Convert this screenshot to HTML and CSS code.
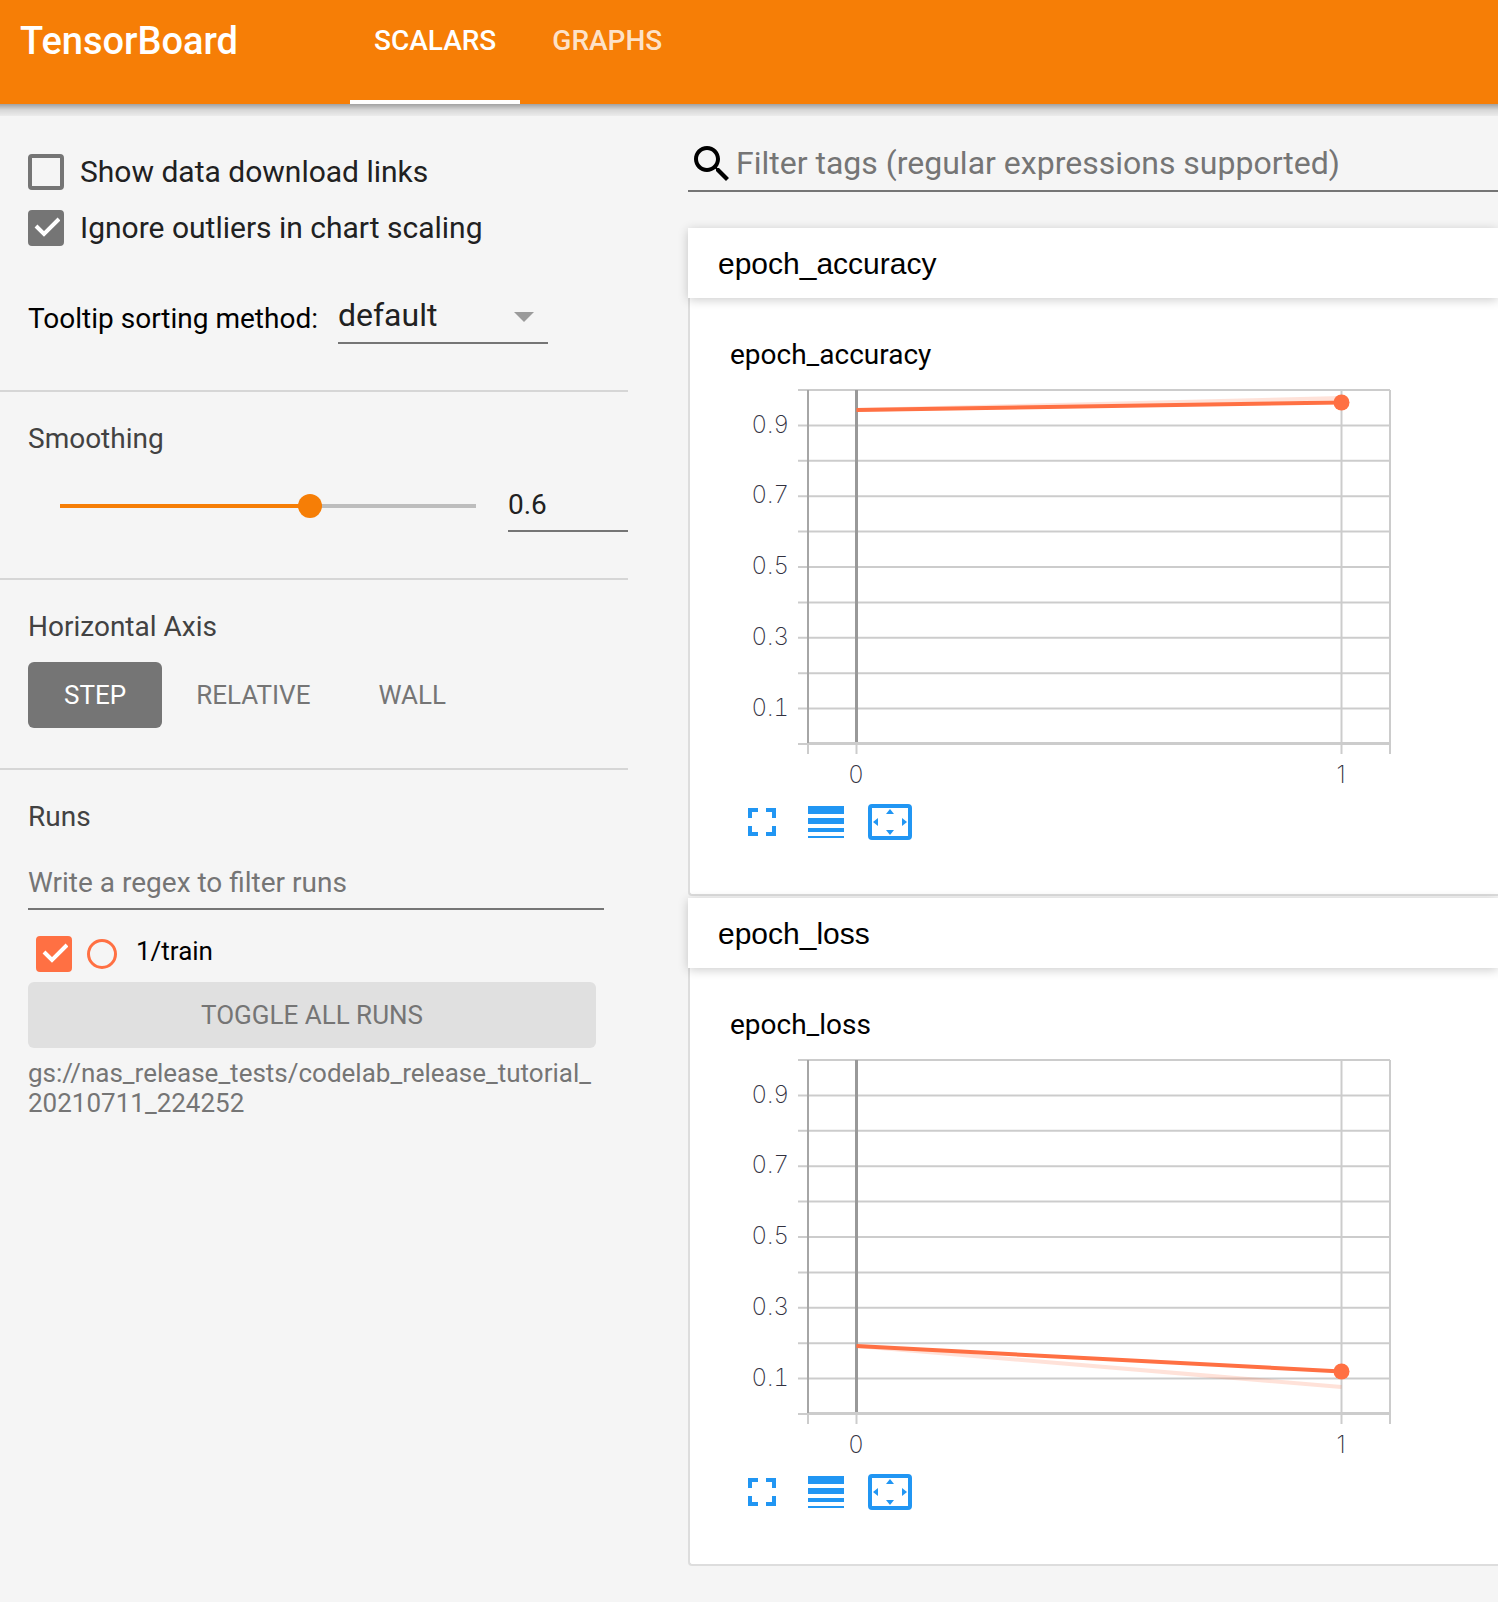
FILE: index.html
```html
<!DOCTYPE html>
<html lang="en">
<head>
<meta charset="utf-8">
<meta name="viewport" content="width=device-width, initial-scale=1">
<title>TensorBoard</title>
<link rel="stylesheet" href="styles.css">
</head>
<body>
<header class="topbar">
  <h1 class="brand">TensorBoard</h1>
  <nav class="tabs">
    <a class="tab tab-active" href="#scalars">SCALARS</a>
    <a class="tab" href="#graphs">GRAPHS</a>
  </nav>
</header>
<div class="layout">
  <aside class="sidebar">
    <section class="panel panel-options">
      <label class="check-row"><input class="check" type="checkbox"><span>Show data download links</span></label>
      <label class="check-row"><input class="check" type="checkbox" checked><span>Ignore outliers in chart scaling</span></label>
      <div class="sort-row">
        <label class="sort-label" for="sort">Tooltip sorting method:</label>
        <span class="select-wrap">
          <select class="select" id="sort"><option>default</option><option>ascending</option><option>descending</option><option>nearest</option></select>
        </span>
      </div>
    </section>
    <section class="panel">
      <h2 class="panel-title" id="smoothing">Smoothing</h2>
      <div class="smooth-row">
        <input class="slider" type="range" min="0" max="1" step="0.1" value="0.6" aria-labelledby="smoothing">
        <input class="line-input smooth-value" type="text" value="0.6" aria-labelledby="smoothing">
      </div>
    </section>
    <section class="panel panel-axis">
      <h2 class="panel-title">Horizontal Axis</h2>
      <div class="axis-row">
        <button class="button button-on" type="button">STEP</button>
        <button class="button" type="button">RELATIVE</button>
        <button class="button" type="button">WALL</button>
      </div>
    </section>
    <section class="panel panel-runs">
      <h2 class="panel-title">Runs</h2>
      <input class="line-input runs-filter" type="text" placeholder="Write a regex to filter runs" aria-label="Write a regex to filter runs">
      <div class="run-row">
        <input class="check check-run" type="checkbox" id="run-train" checked>
        <button class="run-only" type="button" aria-label="Show only 1/train"></button>
        <label class="run-name" for="run-train">1/train</label>
      </div>
      <button class="button button-wide" type="button">TOGGLE ALL RUNS</button>
      <p class="logdir">gs://nas_release_tests/codelab_release_tutorial_<wbr>20210711_224252</p>
    </section>
  </aside>
  <main class="content">
    <div class="tag-search">
      <svg class="search-icon" viewBox="0 0 24 24" aria-hidden="true"><path d="M15.5 14h-.79l-.28-.27C15.41 12.59 16 11.11 16 9.5 16 5.91 13.09 3 9.5 3S3 5.91 3 9.5 5.91 16 9.5 16c1.61 0 3.09-.59 4.23-1.57l.27.28v.79l5 4.99L20.49 19l-4.99-5zm-6 0C7.01 14 5 11.99 5 9.5S7.01 5 9.5 5 14 7.01 14 9.5 11.99 14 9.5 14z"/></svg>
      <input class="tag-input" type="text" placeholder="Filter tags (regular expressions supported)" aria-label="Filter tags">
    </div>

    <section class="card">
      <button class="card-head" type="button">epoch_accuracy</button>
      <div class="card-body">
        <h3 class="chart-title">epoch_accuracy</h3>
        <svg class="chart" viewBox="0 0 662 410" role="img" aria-label="epoch_accuracy by step">
          <path class="grid" d="M68 10H660M68 45.4H660M68 80.8H660M68 116.2H660M68 151.6H660M68 187H660M68 222.4H660M68 257.8H660M68 293.2H660M68 328.6H660M611.5 10V374M660 10V374M78 364V374M126.5 364V374M68 364H78"/>
          <path class="base" d="M78 363.5H660"/>
          <path class="axis" d="M78 10V363"/>
          <path class="zero" d="M126.5 10V362"/>
          <path class="raw" d="M126.5 30L611.5 18"/>
          <path class="line" d="M126.5 30L611.5 22.5"/>
          <circle class="dot" cx="611.5" cy="22.5" r="8"/>
          <g class="ylabels"><text x="59" y="53">0.9</text><text x="59" y="123">0.7</text><text x="59" y="194">0.5</text><text x="59" y="265">0.3</text><text x="59" y="336">0.1</text></g>
          <g class="xlabels"><text x="126" y="403">0</text><text x="611" y="403">1</text></g>
        </svg>
        <div class="tools">
          <button class="tool" type="button" aria-label="Toggle fullscreen"><svg width="28" height="36" viewBox="0 0 28 36"><path d="M0 4h10v4H4v6H0zM18 4h10v10h-4V8h-6zM0 22h4v6h6v4H0zM24 22h4v10H18v-4h6z"/></svg></button>
          <button class="tool" type="button" aria-label="Toggle log scale"><svg width="36" height="36" viewBox="0 0 36 36"><path d="M0 2h36v8H0zM0 14h36v6H0zM0 24h36v4H0zM0 32h36v2H0z"/></svg></button>
          <button class="tool" type="button" aria-label="Fit domain to data"><svg width="44" height="36" viewBox="0 0 44 36"><path fill-rule="evenodd" d="M4 0h36a4 4 0 0 1 4 4v28a4 4 0 0 1-4 4H4a4 4 0 0 1-4-4V4a4 4 0 0 1 4-4zM4 4v28h36V4z"/><path d="M22 5l4 5h-8zM22 31l4-5h-8zM5 18l5-4v8zM39 18l-5-4v8z"/></svg></button>
        </div>
      </div>
    </section>

    <section class="card">
      <button class="card-head" type="button">epoch_loss</button>
      <div class="card-body">
        <h3 class="chart-title">epoch_loss</h3>
        <svg class="chart" viewBox="0 0 662 410" role="img" aria-label="epoch_loss by step">
          <path class="grid" d="M68 10H660M68 45.4H660M68 80.8H660M68 116.2H660M68 151.6H660M68 187H660M68 222.4H660M68 257.8H660M68 293.2H660M68 328.6H660M611.5 10V374M660 10V374M78 364V374M126.5 364V374M68 364H78"/>
          <path class="base" d="M78 363.5H660"/>
          <path class="axis" d="M78 10V363"/>
          <path class="zero" d="M126.5 10V362"/>
          <path class="raw" d="M126.5 296L611.5 337"/>
          <path class="line" d="M126.5 296L611.5 321.5"/>
          <circle class="dot" cx="611.5" cy="321.5" r="8"/>
          <g class="ylabels"><text x="59" y="53">0.9</text><text x="59" y="123">0.7</text><text x="59" y="194">0.5</text><text x="59" y="265">0.3</text><text x="59" y="336">0.1</text></g>
          <g class="xlabels"><text x="126" y="403">0</text><text x="611" y="403">1</text></g>
        </svg>
        <div class="tools">
          <button class="tool" type="button" aria-label="Toggle fullscreen"><svg width="28" height="36" viewBox="0 0 28 36"><path d="M0 4h10v4H4v6H0zM18 4h10v10h-4V8h-6zM0 22h4v6h6v4H0zM24 22h4v10H18v-4h6z"/></svg></button>
          <button class="tool" type="button" aria-label="Toggle log scale"><svg width="36" height="36" viewBox="0 0 36 36"><path d="M0 2h36v8H0zM0 14h36v6H0zM0 24h36v4H0zM0 32h36v2H0z"/></svg></button>
          <button class="tool" type="button" aria-label="Fit domain to data"><svg width="44" height="36" viewBox="0 0 44 36"><path fill-rule="evenodd" d="M4 0h36a4 4 0 0 1 4 4v28a4 4 0 0 1-4 4H4a4 4 0 0 1-4-4V4a4 4 0 0 1 4-4zM4 4v28h36V4z"/><path d="M22 5l4 5h-8zM22 31l4-5h-8zM5 18l5-4v8zM39 18l-5-4v8z"/></svg></button>
        </div>
      </div>
    </section>
  </main>
</div>
</body>
</html>
```
FILE: styles.css
```css
* { box-sizing: border-box; }

body {
  margin: 0;
  min-height: 100vh;
  background: #f5f5f5;
  color: #000;
  font-family: Roboto, sans-serif;
  font-size: 28px;
  line-height: 32px;
}

h1, h2, h3, p { margin: 0; font-weight: 400; }
input, select, button { margin: 0; border: 0; border-radius: 0; padding: 0; background: none; color: inherit; font: inherit; }

/* Top bar */
.topbar {
  position: relative;
  display: flex;
  height: 104px;
  background: #f67e06;
  color: #fff;
}
.topbar::after {
  content: "";
  position: absolute;
  top: 100%;
  left: 0;
  right: 0;
  height: 12px;
  background: linear-gradient(rgba(0, 0, 0, .34), rgba(0, 0, 0, .12) 50%, rgba(0, 0, 0, .04));
}
.brand { width: 350px; padding: 18px 0 0 20px; font-size: 38px; line-height: 46px; font-weight: 500; }
.tabs { display: flex; gap: 8px; }
.tab {
  padding: 25px 24px 0;
  border-bottom: 4px solid transparent;
  color: rgba(255, 255, 255, .8);
  font-weight: 500;
  text-decoration: none;
}
.tab-active { border-color: #fff; color: #fff; }

.layout { display: flex; gap: 60px; }

/* Sidebar */
.sidebar { flex: 0 0 628px; }
.panel { padding: 31px 0 46px 28px; border-bottom: 2px solid #d6d6d6; }
.panel-options { padding-top: 50px; }
.panel-axis { padding-bottom: 40px; }
.panel-runs { padding-right: 24px; border-bottom: 0; }
.panel-title { color: #424242; font-size: 28px; line-height: 32px; }

.check-row { display: flex; gap: 16px; margin-bottom: 20px; color: #212121; font-size: 30px; line-height: 36px; }
.check {
  appearance: none;
  flex: none;
  width: 36px;
  height: 36px;
  border: 4px solid #757575;
  border-radius: 4px;
}
.check:checked {
  background: #757575 url("data:image/svg+xml,%3Csvg xmlns='http://www.w3.org/2000/svg' viewBox='0 0 36 36'%3E%3Cpath d='M8 16l8 8L31 9' fill='none' stroke='%23fff' stroke-width='4'/%3E%3C/svg%3E") center / 36px 36px no-repeat border-box;
}
.check-run { border-color: #ff7043; }
.check-run:checked { background-color: #ff7043; }

.sort-row { display: flex; align-items: flex-end; gap: 20px; margin-top: 50px; }
.sort-label { padding-bottom: 9px; }
.select-wrap { position: relative; display: flex; width: 210px; }
.select-wrap::after {
  content: "";
  position: absolute;
  right: 14px;
  top: 16px;
  border: 10px solid transparent;
  border-top-color: #9b9b9b;
  border-bottom: 0;
  pointer-events: none;
}
.select {
  appearance: none;
  width: 100%;
  height: 48px;
  padding-bottom: 8px;
  border-bottom: 2px solid #757575;
  color: #212121;
  font-size: 32px;
  line-height: 38px;
}

.smooth-row { display: flex; gap: 20px; margin-top: 33px; padding-left: 20px; }
.slider {
  appearance: none;
  flex: 1;
  min-width: 0;
  height: 36px;
  background: linear-gradient(90deg, #f67e06 60%, #bdbdbd 60%) center / calc(100% - 24px) 4px no-repeat;
}
.slider::-webkit-slider-thumb { appearance: none; width: 24px; height: 24px; border-radius: 50%; background: #f67e06; }
.line-input { height: 44px; padding-bottom: 10px; border-bottom: 2px solid #757575; color: #212121; line-height: 32px; }
.smooth-value { width: 120px; }

.axis-row { display: flex; margin-top: 19px; }
.button { height: 66px; padding: 0 34px; border-radius: 6px; color: #757575; font-size: 26px; line-height: 30px; }
.button-on { padding: 0 36px; background: #757575; color: #fff; }
.button-wide { display: block; width: 568px; margin: 10px 0; background: #e0e0e0; }

.runs-filter { width: 100%; margin-top: 33px; }
.runs-filter::placeholder, .tag-input::placeholder { color: #757575; opacity: 1; }
.run-row { display: flex; margin-top: 26px; padding-left: 8px; }
.run-only { width: 30px; height: 30px; margin: 3px 19px 3px 15px; border: 3px solid #ff7043; border-radius: 50%; }
.run-name { font-size: 26px; line-height: 30px; }
.logdir { color: #757575; font-size: 26px; line-height: 30px; }

/* Charts */
.content { flex: 1; min-width: 0; padding: 34px 0 36px; }
.tag-search { display: flex; align-items: center; height: 54px; margin-bottom: 36px; border-bottom: 2px solid #757575; }
.search-icon { flex: none; width: 48px; height: 48px; }
.tag-input { flex: 1; min-width: 0; padding-bottom: 2px; font-size: 32px; line-height: 38px; }

.card { margin-bottom: 2px; }
.card:last-child { margin-bottom: 0; }
.card-head {
  position: relative;
  display: block;
  width: 100%;
  height: 70px;
  padding: 2px 30px 0;
  background: #fff;
  box-shadow: 0 2px 10px rgba(0, 0, 0, .2);
  font-family: "Liberation Sans", Arial, sans-serif;
  font-size: 30px;
  text-align: left;
}
.card-body {
  padding: 41px 40px 54px;
  border: 2px solid #ddd;
  border-width: 0 0 2px 2px;
  border-radius: 0 0 0 4px;
  background: #fff;
}
.chart-title { font-size: 28px; line-height: 32px; }
.chart { display: block; width: 662px; height: 410px; margin-top: 9px; }
.grid { stroke: #000; stroke-opacity: .2; stroke-width: 2; }
.base { stroke: #ccc; stroke-width: 3; }
.axis { stroke: #a6a6a6; stroke-width: 2; }
.zero { stroke: #999; stroke-width: 3; }
.line { stroke: #ff7043; stroke-width: 4; }
.raw { stroke: #ff7043; stroke-opacity: .2; stroke-width: 4; }
.dot { fill: #ff7043; }
.ylabels, .xlabels { fill: #32313f; font-family: Inter, sans-serif; font-size: 24px; font-weight: 200; }
.ylabels { text-anchor: end; font-variant-numeric: tabular-nums; }
.xlabels { text-anchor: middle; }

.tools { display: flex; align-items: center; margin-top: 14px; padding-left: 18px; }
.tool { display: flex; fill: #2196f3; }
.tool:nth-child(2) { margin: 0 24px 0 32px; }
```
